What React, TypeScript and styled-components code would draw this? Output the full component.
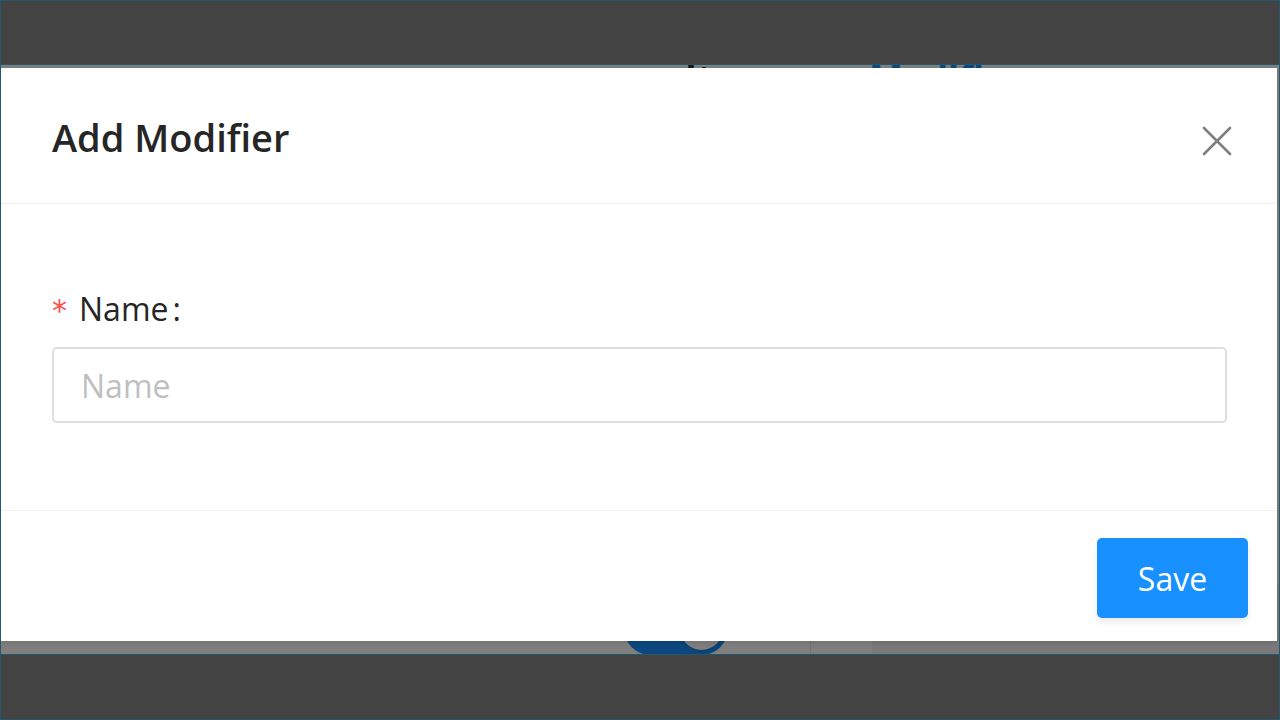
import React from 'react';
import styled, { createGlobalStyle } from 'styled-components';

const Global = createGlobalStyle`
  html, body { margin: 0; padding: 0; background: #434343; }
  body { font-family: "Open Sans", "Noto Sans", "Liberation Sans", sans-serif; }
  * { box-sizing: border-box; }
`;

const TEAL = '#24586a';

const Screen = styled.div`
  width: 1280px;
  height: 720px;
  border: 1px solid ${TEAL};
  background: #434343;
  display: flex;
  flex-direction: column;
  overflow: hidden;
`;

const DarkBand = styled.div<{ $h: number }>`
  flex: none;
  height: ${(p) => p.$h}px;
`;

const Viewport = styled.div`
  position: relative;
  flex: none;
  height: 591px;
  border-top: 1px solid ${TEAL};
  border-bottom: 1px solid ${TEAL};
  background: #fff;
  overflow: hidden;
`;

const BackPage = styled.div`
  height: 100%;
  display: flex;
  flex-direction: column;
  justify-content: space-between;
`;

const TabRow = styled.div`
  display: flex;
  gap: 82px;
  padding-left: 684px;
  margin-top: -7px;
  font-size: 36px;
  line-height: 40px;
`;

const Tab = styled.span<{ $active?: boolean }>`
  color: ${(p) => (p.$active ? '#1890ff' : '#262626')};
  font-weight: 700;
`;

const BottomRow = styled.div`
  display: grid;
  grid-template-columns: 809px 62px 1fr;
  height: 70px;
`;

const Cell = styled.div<{ $shade?: boolean; $line?: boolean; $pad?: number }>`
  display: flex;
  align-items: flex-end;
  background: ${(p) => (p.$shade ? '#f5f5f5' : '#fff')};
  border-left: ${(p) => (p.$line ? '1px solid #e8e8e8' : 'none')};
  padding-left: ${(p) => p.$pad ?? 0}px;
`;

const Toggle = styled.div`
  position: relative;
  width: 104px;
  height: 53px;
  border-radius: 27px;
  background: #1890ff;
  margin-bottom: -1px;
`;

const Knob = styled.div`
  position: absolute;
  right: 5px;
  top: 5px;
  width: 43px;
  height: 43px;
  border-radius: 50%;
  background: #fff;
  box-shadow: 0 2px 4px rgba(0, 35, 11, 0.2);
`;

const Overlay = styled.div`
  position: absolute;
  inset: 0;
  background: rgba(0, 0, 0, 0.5);
`;

const Modal = styled.div`
  position: absolute;
  top: 3px;
  left: 0;
  width: 1276px;
  height: 573px;
  background: #fff;
  display: flex;
  flex-direction: column;
  box-shadow: 0 2px 6px rgba(0, 0, 0, 0.12);
`;

const Header = styled.div`
  height: 136px;
  flex: none;
  border-bottom: 1px solid #f0f0f0;
  display: flex;
  align-items: center;
  justify-content: space-between;
  padding: 0 45px 0 51px;
`;

const Title = styled.div`
  font-size: 38px;
  font-weight: 600;
  color: #262626;
  line-height: 1;
  margin-top: 3px;
`;

const CloseBtn = styled.button`
  border: none;
  background: none;
  padding: 0;
  width: 30px;
  height: 30px;
  margin-top: 11px;
  color: #7f7f7f;
  display: flex;
  align-items: center;
  justify-content: center;
  cursor: pointer;
`;

const Body = styled.div`
  flex: none;
  height: 307px;
  border-bottom: 1px solid #f0f0f0;
  padding: 82px 50px 0 51px;
  display: flex;
  flex-direction: column;
  gap: 17px;
`;

const Label = styled.label`
  display: flex;
  align-items: center;
  height: 44px;
  font-size: 32px;
  color: #262626;
`;

const Required = styled.span`
  color: #ff4d4f;
  font-size: 30px;
  margin-right: 12px;
  margin-top: 4px;
  font-family: "DejaVu Sans", sans-serif;
`;

const Colon = styled.span`
  margin-left: 4px;
`;

const Input = styled.input`
  height: 76px;
  width: 100%;
  border: 2px solid #dedede;
  border-radius: 5px;
  padding: 0 27px;
  font-size: 32px;
  font-family: inherit;
  color: #262626;
  outline: none;
  &::placeholder {
    color: #bfbfbf;
  }
`;

const Footer = styled.div`
  flex: 1;
  display: flex;
  justify-content: flex-end;
  align-items: flex-start;
  padding: 27px 29px 0 0;
`;

const PrimaryButton = styled.button`
  width: 151px;
  height: 80px;
  border: none;
  border-radius: 5px;
  background: #1890ff;
  color: #fff;
  font-size: 32px;
  font-family: inherit;
  box-shadow: 0 4px 6px rgba(0, 0, 0, 0.08);
  cursor: pointer;
`;

export default function App() {
  return (
    <>
      <Global />
      <Screen>
        <DarkBand $h={63} />
        <Viewport>
          <BackPage>
            <TabRow>
              <Tab>Items</Tab>
              <Tab $active>Modifiers</Tab>
            </TabRow>
            <BottomRow>
              <Cell $pad={623}>
                <Toggle>
                  <Knob />
                </Toggle>
              </Cell>
              <Cell $line />
              <Cell $shade />
            </BottomRow>
          </BackPage>
          <Overlay />
          <Modal>
            <Header>
              <Title>Add Modifier</Title>
              <CloseBtn aria-label="Close">
                <svg width="30" height="30" viewBox="0 0 30 30">
                  <path d="M2 2 L28 28 M28 2 L2 28" stroke="currentColor" strokeWidth="2.6" strokeLinecap="round" />
                </svg>
              </CloseBtn>
            </Header>
            <Body>
              <Label>
                <Required>*</Required>
                Name<Colon>:</Colon>
              </Label>
              <Input placeholder="Name" />
            </Body>
            <Footer>
              <PrimaryButton>Save</PrimaryButton>
            </Footer>
          </Modal>
        </Viewport>
        <DarkBand $h={64} />
      </Screen>
    </>
  );
}
